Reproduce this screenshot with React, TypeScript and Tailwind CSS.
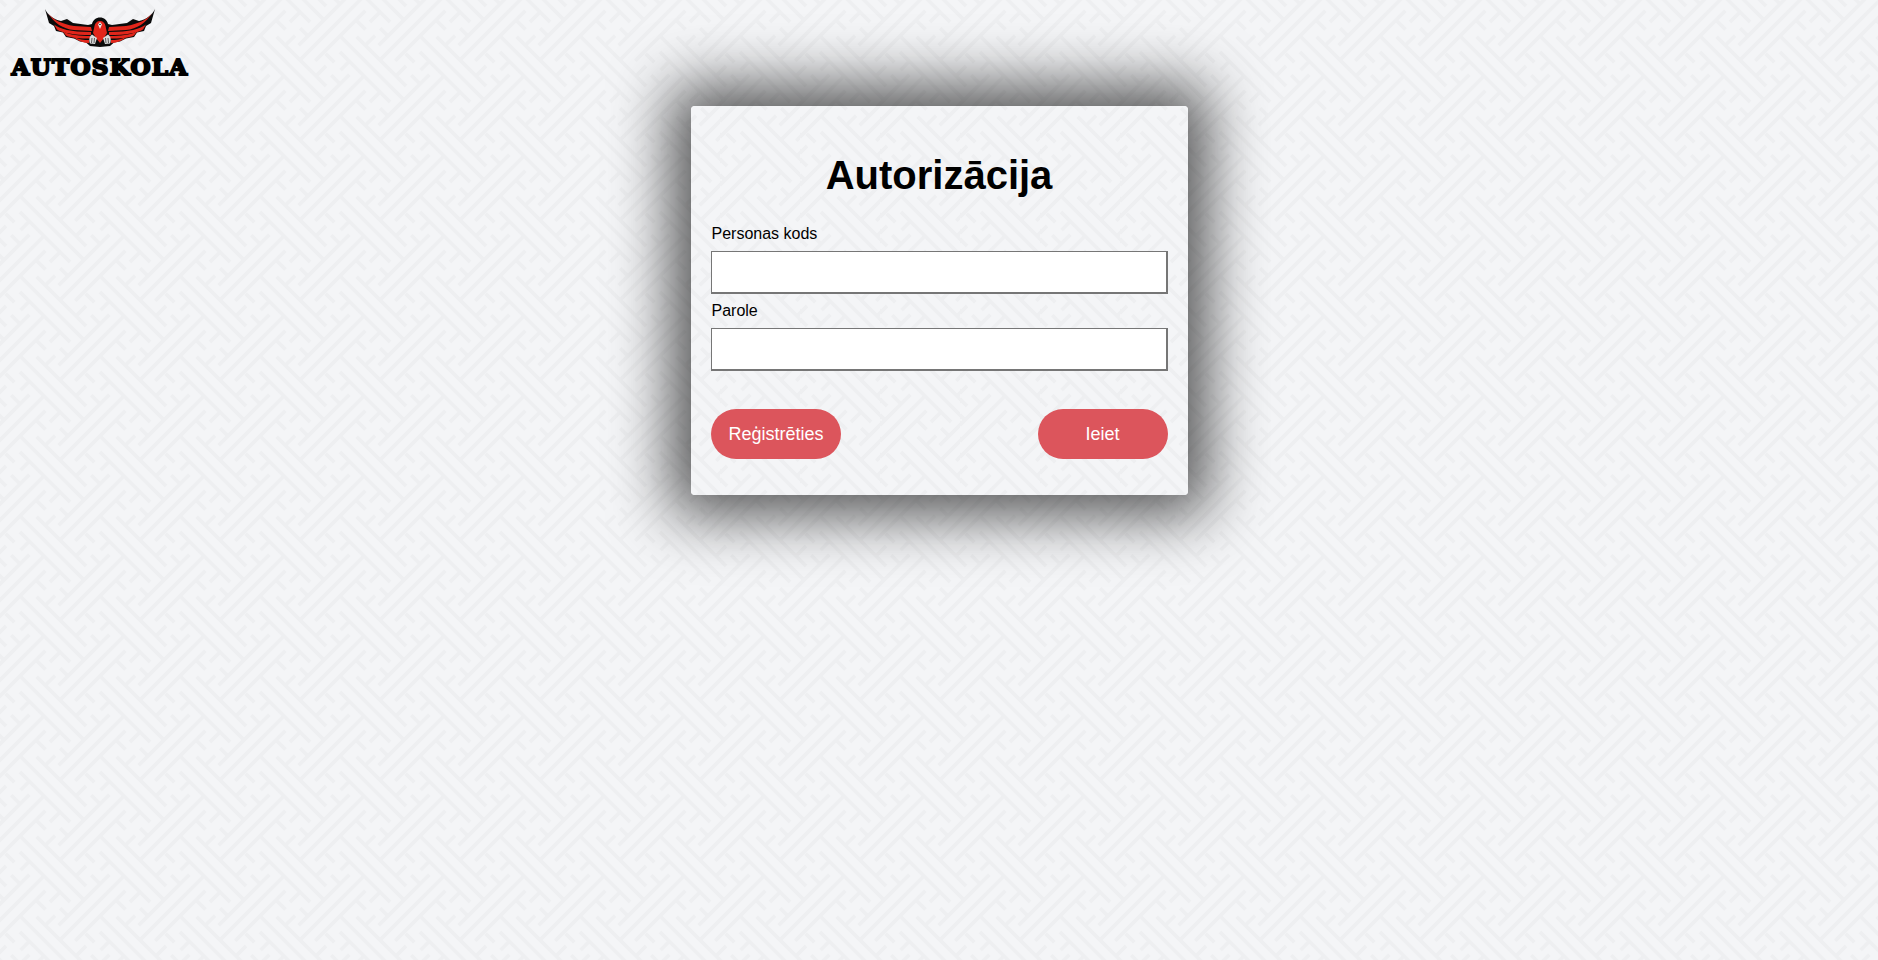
const SEGMENTS: [number, number, number, number][] = [
  // [u1, v1, u2, v2] on the rotated maze grid
  [192, 296, 192, 672],
  [240, 340, 240, 636],
  [144, 336, 144, 636],
  [384, 720, 0, 720],
  [344, 672, 40, 672],
  [344, 768, 44, 768],
  [246, 392, 298, 392],
  [336, 385, 336, 430],
  [336, 538, 336, 590],
  [332, 632, 390, 632],
  [245, 576, 300, 576],
  [288, 620, 288, 675],
  [48, 535, 48, 585],
  [84, 576, 140, 576],
];

function mazePath(): string {
  let d = "";
  for (let i = -6; i <= 6; i++) {
    for (let j = -6; j <= 6; j++) {
      for (const [u1, v1, u2, v2] of SEGMENTS) {
        const x1 = 20 + (u1 + v1) / 6 + i * 80;
        const y1 = 20 + (v1 - u1) / 6 + j * 80;
        const x2 = 20 + (u2 + v2) / 6 + i * 80;
        const y2 = 20 + (v2 - u2) / 6 + j * 80;
        const inside = (x: number, y: number) => x > -10 && x < 90 && y > -10 && y < 90;
        if (inside(x1, y1) || inside(x2, y2) || inside((x1 + x2) / 2, (y1 + y2) / 2)) {
          d += `M${x1.toFixed(1)} ${y1.toFixed(1)}L${x2.toFixed(1)} ${y2.toFixed(1)}`;
        }
      }
    }
  }
  return d;
}

const tile = `<svg xmlns="http://www.w3.org/2000/svg" width="80" height="80"><rect width="80" height="80" fill="#f4f5f7"/><path d="${mazePath()}" stroke="#eeeff1" stroke-width="3.4" fill="none"/></svg>`;
const maze = `url("data:image/svg+xml,${encodeURIComponent(tile)}")`;

function Wing() {
  return (
    <g>
      <path
        d="M45 9C48 15 53 19 61 21L67 19L73 23L88 25L92 24C93 20 96 17.5 100 17.5L100 47L95 46.5L90 46L86 42.5L80 41.5L74 38.5L66 37L63 32.5L56 31L54 26L49 23Z"
        fill="#0b0b0b"
      />
      <path d="M48 13C53 20 62 24 74 26L91 27L92 31L74 30C63 29 54 23 48 13Z" fill="#e2261b" />
      <path d="M54 24.5C60 29 70 32 91 32L91 35C74 35 62 33 57 29.5Z" fill="#e2261b" />
      <path d="M63 31.5C70 35 80 36 90 36L90 38.5C80 39 70 37.5 66 35.5Z" fill="#e2261b" />
      <path d="M74 37C79 39.5 84 40 89 40L89 43C84 43 79 41 76 39Z" fill="#e2261b" />
      <path d="M100 21C97 21 95 23 94.5 26L93 33L96 38L100 43Z" fill="#e2261b" />
      <path d="M92 34.5C89.5 36 88.5 40 90 43.5L95 44L97 38Z" fill="#dcdcdc" />
      <path d="M92 38L91.5 43M94.5 38L94 43" stroke="#222" strokeWidth="0.7" />
    </g>
  );
}

export default function App() {
  return (
    <div
      className="min-h-screen h-[960px] overflow-hidden bg-fixed font-['Liberation_Sans',Arial,sans-serif] text-black"
      style={{ backgroundImage: maze }}
    >
      <div className="w-[200px] h-[84px] flex flex-col items-center">
        <svg width="200" height="54" viewBox="0 0 200 54" className="shrink-0">
          <Wing />
          <g transform="translate(200 0) scale(-1 1)">
            <Wing />
          </g>
          <path d="M100 22L102 24.5L100 29L98 24.5Z" fill="#e8e8e8" />
          <path d="M99.2 24.5h1.6" stroke="#111" strokeWidth="0.9" />
        </svg>
        <div className="mt-[1px] font-['DejaVu_Serif',serif] font-bold text-[23px] leading-[24px] whitespace-nowrap tracking-[1.3px] [-webkit-text-stroke:2px_#000]">
          AUTOSKOLA
        </div>
      </div>
      <div
        className="mt-[22px] mx-auto w-[497px] h-[389px] rounded-[4px] bg-fixed shadow-[0_0_60px_20px_rgba(0,0,0,0.66)] px-[20px] pt-[46px]"
        style={{ backgroundImage: maze }}
      >
        <h1 className="text-center font-bold text-[40px] leading-[46px]">Autorizācija</h1>
        <label className="block mt-[27px] text-[16px] leading-[18px] ml-[1px]">Personas kods</label>
        <input
          type="text"
          className="block mt-[8px] w-full h-[43px] bg-white border border-[#767676] border-r-2 border-b-2"
        />
        <label className="block mt-[8px] text-[16px] leading-[18px] ml-[1px]">Parole</label>
        <input
          type="password"
          className="block mt-[8px] w-full h-[43px] bg-white border border-[#767676] border-r-2 border-b-2"
        />
        <div className="mt-[38px] flex justify-between">
          <button className="w-[130px] h-[50px] pl-[1px] rounded-full bg-[#dc555c] text-white text-[18px]">Reģistrēties</button>
          <button className="w-[130px] h-[50px] rounded-full bg-[#dc555c] text-white text-[18px]">Ieiet</button>
        </div>
      </div>
    </div>
  );
}
